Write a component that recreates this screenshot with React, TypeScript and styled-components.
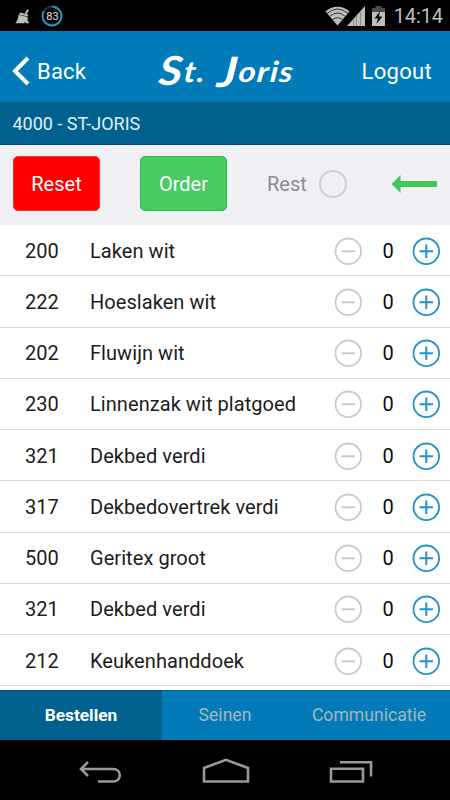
import React from 'react';
import styled, { createGlobalStyle } from 'styled-components';

const GlobalStyle = createGlobalStyle`
  * { box-sizing: border-box; }
  html, body { margin: 0; padding: 0; background: #000; }
  body { font-family: Roboto, "Liberation Sans", sans-serif; overflow: hidden; }
  button { font: inherit; border: 0; padding: 0; background: none; color: inherit; }
  svg { display: block; flex: none; }
`;

const Screen = styled.div`
  width: 450px;
  height: 800px;
  display: flex;
  flex-direction: column;
  overflow: hidden;
`;

const StatusBar = styled.div`
  height: 31px;
  flex: none;
  background: #000;
  color: #bebebe;
  display: flex;
  align-items: center;
  gap: 11px;
  padding: 1px 7px 0 15px;
`;

const StatusRight = styled.div`
  margin-left: auto;
  display: flex;
  align-items: center;
`;

const Clock = styled.span`
  font-size: 20px;
  letter-spacing: -0.1px;
  margin-left: 8px;
  line-height: 30px;
`;

const Header = styled.header`
  height: 71px;
  flex: none;
  background: #007bb8;
  color: #fff;
  display: grid;
  grid-template-columns: 140px 1fr 140px;
  align-items: center;
  padding: 9px 18px 0 12px;
`;

const HeaderButton = styled.button<{ $end?: boolean }>`
  display: flex;
  align-items: center;
  gap: 7px;
  font-size: 22px;
  letter-spacing: ${p => (p.$end ? '0.3px' : '0.2px')};
  justify-content: ${p => (p.$end ? 'flex-end' : 'flex-start')};
`;

const Brand = styled.h1`
  margin: -5px 0 0 10px;
  display: flex;
  align-items: baseline;
  justify-content: center;
  font: italic 700 29px/44px Lato, sans-serif;
  letter-spacing: 1.1px;
  white-space: nowrap;
  transform: scaleX(1.14) skewX(-5deg);
`;

const Initial = styled.span<{ $drop?: boolean }>`
  font-size: ${p => (p.$drop ? '42px' : '40px')};
  line-height: 44px;
  transform: translateY(${p => (p.$drop ? '5px' : '3px')});
  margin-left: ${p => (p.$drop ? '10px' : '0')};
`;

const LocationBar = styled.div`
  height: 43px;
  flex: none;
  background: #00618e;
  border-bottom: 1px solid #004581;
  color: #e2eef5;
  font-size: 18px;
  line-height: 43px;
  padding-left: 12.5px;
`;

const Toolbar = styled.div`
  height: 80px;
  flex: none;
  background: #efeff4;
  display: flex;
  align-items: flex-start;
  padding: 11px 12px 0 13px;
`;

const ActionButton = styled.button<{ $color: string; $edge: string }>`
  width: 87px;
  height: 55px;
  border-radius: 5px;
  border: 1px solid ${p => p.$edge};
  background: ${p => p.$color};
  color: #fff;
  font-size: 20px;
  margin-right: 40px;
`;

const RestToggle = styled.label`
  height: 55px;
  display: flex;
  align-items: center;
  gap: 12px;
  color: #8b8b90;
  font-size: 20px;
`;

const Radio = styled.span`
  width: 28px;
  height: 28px;
  border: 2px solid #cfcfd3;
  border-radius: 50%;
`;

const ArrowSlot = styled.div`
  margin: 18px 0 0 auto;
`;

const List = styled.main`
  flex: 1;
  min-height: 0;
  background: #fff;
  overflow: hidden;
`;

const Row = styled.div`
  height: 51.25px;
  border-bottom: 1px solid #dcdcdc;
  display: grid;
  grid-template-columns: 65px 1fr 28px 50px 28px;
  align-items: center;
  padding: 1px 10px 0 25px;
  font-size: 20px;
  color: #1c1c1c;
`;

const Name = styled.span`
  letter-spacing: 0.06px;
  white-space: nowrap;
`;

const Amount = styled.span`
  text-align: center;
  padding-left: 2px;
  color: #0c0c0c;
`;

const Tabs = styled.nav`
  height: 50px;
  flex: none;
  display: grid;
  grid-template-columns: 162px 126px 162px;
  background: #007bb8;
`;

const Tab = styled.button<{ $active?: boolean }>`
  background: ${p => (p.$active ? '#00618e' : '#007bb8')};
  border-top: 1px solid ${p => (p.$active ? '#003f80' : '#0065a8')};
  color: ${p => (p.$active ? '#fff' : '#a8b4bf')};
  font-weight: ${p => (p.$active ? 700 : 400)};
  font-size: ${p => (p.$active ? '17.3px' : '17.6px')};
  padding-bottom: 1px;
`;

const SystemNav = styled.div`
  height: 60px;
  flex: none;
  background: #000;
  display: flex;
  justify-content: space-between;
  align-items: flex-start;
  padding: 18px 77px 0 79px;
`;

const items: [number, string][] = [
  [200, 'Laken wit'],
  [222, 'Hoeslaken wit'],
  [202, 'Fluwijn wit'],
  [230, 'Linnenzak wit platgoed'],
  [321, 'Dekbed verdi'],
  [317, 'Dekbedovertrek verdi'],
  [500, 'Geritex groot'],
  [321, 'Dekbed verdi'],
  [212, 'Keukenhanddoek'],
];

const StepIcon = ({ plus }: { plus?: boolean }) => (
  <svg width="28" height="28" viewBox="0 0 28 28" fill="none" stroke={plus ? '#2394c6' : '#cbcbcb'}>
    <circle cx="14.3" cy="14.3" r="12.8" strokeWidth="1.8" />
    <path d={plus ? 'M7.5 14.3H21M14.3 7.5V21' : 'M7.5 14.3H21'} strokeWidth="2" />
  </svg>
);

export default function App() {
  return (
    <Screen>
      <GlobalStyle />
      <StatusBar>
        <svg width="15" height="15" viewBox="0 0 15 15" fill="#bebebe">
          <path d="M12.3 0.2L14 1L11.8 5L9.8 4.2Z" />
          <path d="M5 3.4L13.2 5.4L12.8 7.6L4 5.4Z" />
          <path d="M3.6 5.8L12.6 8L12.7 12L14.6 14.3H10.6L9.9 12L9.5 14.3H0.3C2.3 12 3.3 9.2 3.6 5.8Z" />
        </svg>
        <svg width="22" height="24" viewBox="1 0 22 24">
          <circle cx="12" cy="12" r="9.5" fill="none" stroke="#10394c" strokeWidth="2" />
          <circle cx="12" cy="12" r="9.5" fill="none" stroke="#2394bb" strokeWidth="2" strokeDasharray="49.5 10.2" transform="rotate(-90 12 12)" />
          <text x="12.4" y="15.8" fill="#d0d0d0" stroke="#d0d0d0" strokeWidth="0.2" fontSize="11" textAnchor="middle">83</text>
        </svg>
        <StatusRight>
          <svg width="61" height="22" viewBox="0 0 61 22" fill="#bebebe">
            <path d="M12.5 20.5L0.5 6.5C7 0 18 0 24.5 6.5Z" />
            <path d="M2 8.5Q12.5 -0.5 23 8.5M4.6 11.5Q12.5 4.5 20.4 11.5M7.5 14.8Q12.5 10.5 17.5 14.8" stroke="#222" strokeWidth="0.9" fill="none" />
            <path d="M40 1V21H22Z" />
            <path d="M28.5 14V21M31.5 11V21M35.5 7V21" stroke="#888" strokeWidth="1" />
            <path d="M47 4.5H60V21H47Z" />
            <path d="M50.5 1H56.5V3H60V7H47V3H50.5Z" fill="#4d4d4d" />
            <path d="M55 6L49.5 13.5H53L51.5 19L57.5 11.5H54Z" fill="#111" />
          </svg>
          <Clock>14:14</Clock>
        </StatusRight>
      </StatusBar>
      <Header>
        <HeaderButton>
          <svg width="18" height="30" viewBox="0 0 18 30" fill="none" stroke="#fff" strokeWidth="4">
            <path d="M16 2L3 15L16 28" />
          </svg>
          Back
        </HeaderButton>
        <Brand><Initial>S</Initial>t. <Initial $drop>J</Initial>oris</Brand>
        <HeaderButton $end>Logout</HeaderButton>
      </Header>
      <LocationBar>4000 - ST-JORIS</LocationBar>
      <Toolbar>
        <ActionButton $color="#ff0000" $edge="#ff3035">Reset</ActionButton>
        <ActionButton $color="#48cb60" $edge="#20c244">Order</ActionButton>
        <RestToggle>Rest<Radio /></RestToggle>
        <ArrowSlot>
          <svg width="47" height="20" viewBox="0 0 47 20">
            <path d="M0.5 10L9.5 1V7H46V13H9.5V19Z" fill="#40c95b" />
          </svg>
        </ArrowSlot>
      </Toolbar>
      <List>
        {items.map(([code, name], i) => (
          <Row key={i}>
            <span>{code}</span>
            <Name>{name}</Name>
            <StepIcon />
            <Amount>0</Amount>
            <StepIcon plus />
          </Row>
        ))}
      </List>
      <Tabs>
        <Tab $active>Bestellen</Tab>
        <Tab>Seinen</Tab>
        <Tab>Communicatie</Tab>
      </Tabs>
      <SystemNav>
        <svg width="43" height="26" viewBox="0 0 43 26" fill="none" stroke="#999" strokeWidth="2.6">
          <path d="M9 4L2 11L9 18M2 11H34C43 11 43 23.5 34 23.5H19" />
        </svg>
        <svg width="48" height="26" viewBox="0 0 48 26" fill="none" stroke="#999" strokeWidth="2.6">
          <path d="M2 23.5V10L24 1.8L46 10V23.5Z" />
        </svg>
        <svg width="44" height="26" viewBox="0 0 44 26" fill="none" stroke="#999" strokeWidth="2.6">
          <path d="M2 10.7H34V23.5H2ZM11 4.3H42V18.5" />
        </svg>
      </SystemNav>
    </Screen>
  );
}
